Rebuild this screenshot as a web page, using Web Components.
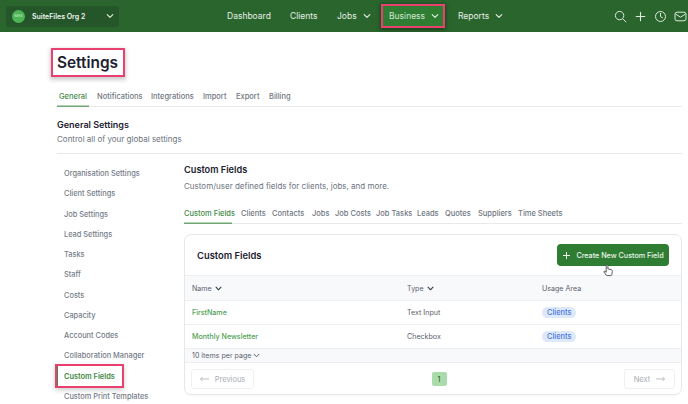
<!DOCTYPE html>
<html><head><meta charset="utf-8">
<style>
html,body{margin:0;height:404px;overflow:hidden;background:#fff}
body{font-family:Inter,Lato,"Noto Sans",sans-serif;color:#1c2230;position:relative}
</style></head><body>
<app-topbar></app-topbar>
<settings-page></settings-page>
<hand-cursor></hand-cursor>
<script>
const chev=(s=8,c='currentColor',w=1.1)=>`<svg width="${s}" height="${s}" viewBox="0 0 10 10" fill="none" stroke="${c}" stroke-width="${w*10/s}" stroke-linecap="round" stroke-linejoin="round"><path d="M1.5 3.2 5 6.8 8.5 3.2"/></svg>`;
function def(name,css,html){
  customElements.define(name,class extends HTMLElement{
    constructor(){super();const r=this.attachShadow({mode:'open'});
      r.innerHTML=`<style>${css}</style>${typeof html==='function'?html(this):html}`;}
  });
}
def('nav-item',`
:host{display:flex;align-items:center;gap:6px;color:#e6f0e6;font-size:8.5px;font-weight:400;height:22px;box-sizing:border-box;white-space:nowrap}
:host([active]){background:#2e7d32;box-shadow:inset 0 0 0 2px #e8406f,0 1px 4px 1px rgba(0,0,0,.35);padding-left:8px;color:#d5e8d5;height:24px}
`,el=>`<slot></slot>${el.hasAttribute('menu')?chev(8,'#e6f0e6'):''}`);
def('app-topbar',`
:host{display:flex;align-items:center;height:32px;background:#2a652d;box-sizing:border-box;padding:0 0 0 6px;overflow:hidden}
.org{width:113px;height:21px;background:#25562a;border-radius:3px;display:flex;align-items:center;padding:0 5px;box-sizing:border-box;color:#eef5ee;font-size:7px;font-weight:600}
.av{width:13px;height:13px;border-radius:50%;background:#4db555;color:#d7f0d8;font-size:3.6px;display:grid;place-items:center;margin:0 7px 0 1px;font-weight:400}
.name{flex:1}
nav{display:flex;align-items:center;margin-left:108px}
nav-item:nth-child(1){width:63px}
nav-item:nth-child(2){width:47px}
nav-item:nth-child(3){width:44px}
nav-item:nth-child(4){width:64px;margin-right:13px}
.ic{display:flex;gap:7px;margin-left:auto;margin-right:1px;color:#dcebdc}
svg.i{display:block}
`,`<div class="org"><span class="av">MAX</span><span class="name">SuiteFiles Org 2</span>${chev(8,'#dcebdc')}</div>
<nav><nav-item>Dashboard</nav-item><nav-item>Clients</nav-item><nav-item menu>Jobs</nav-item><nav-item menu active>Business</nav-item><nav-item menu>Reports</nav-item></nav>
<div class="ic">
<svg class="i" width="13" height="13" viewBox="0 0 13 13" fill="none" stroke="currentColor" stroke-width="1"><circle cx="5.6" cy="5.6" r="4.2"/><path d="M8.8 8.8 12 12" stroke-linecap="round"/></svg>
<svg class="i" width="13" height="13" viewBox="0 0 13 13" fill="none" stroke="currentColor" stroke-width="1.1"><path d="M6.5 2.2v8.6M2.2 6.5h8.6" stroke-linecap="round"/></svg>
<svg class="i" width="13" height="13" viewBox="0 0 13 13" fill="none" stroke="currentColor" stroke-width="1"><circle cx="6.5" cy="6.5" r="5"/><path d="M6.5 3.3v3.4l2 1" stroke-linecap="round"/></svg>
<svg class="i" width="13" height="13" viewBox="0 0 13 13" fill="none" stroke="currentColor" stroke-width="1"><rect x="1" y="2.2" width="11" height="8.6" rx="2"/><path d="M1.5 4 6.5 7.2 11.5 4"/></svg>
</div>`);
def('tab-bar',`
:host{display:flex;border-bottom:1px solid #e8e9ec}
`,`<slot></slot>`);
def('tab-item',`
:host{display:block;padding:1px 0 5px;color:#6f7782;margin-bottom:-1px;font-size:7.5px;font-weight:500;white-space:nowrap;line-height:10px}
:host([active]){color:#458a4b;box-shadow:inset 0 -1.5px 0 #6fa873}
`,`<slot></slot>`);
def('side-item',`
:host{display:flex;align-items:center;height:20.25px;padding-left:7px;font-size:7.4px;font-weight:500;color:#757c87;box-sizing:border-box;position:relative;white-space:nowrap}
:host([active]){color:#3f8a45;font-weight:600;background:#fff;box-shadow:inset 1px 0 0 #3f8a45,0 0 0 2px #e8406f,0 2px 5px 2px rgba(0,0,0,.2);width:65px;z-index:1}
`,`<slot></slot>`);
def('pill-badge',`
:host{display:inline-block;background:#dde8f8;color:#4a78e0;font-size:7.4px;font-weight:500;padding:1.5px 5px;border-radius:6px;line-height:8px}
`,`<slot></slot>`);
def('page-btn',`
:host{display:flex;align-items:center;justify-content:center;gap:6px;height:20px;border:1px solid #eff0f2;border-radius:3px;box-sizing:border-box;color:#a9aeb6;font-size:7.5px}
`,`<slot></slot>`);
const arr=d=>`<svg width="9" height="6" viewBox="0 0 9 6" fill="none" stroke="#a9aeb6" stroke-width=".8">${d?'<path d="M0 3h8.5M6.5 1l2 2-2 2"/>':'<path d="M9 3H.5M2.5 1l-2 2 2 2"/>'}</svg>`;
def('fields-card',`
:host{display:block;margin-top:10px;border:1px solid #e6e7ea;border-radius:7px;box-shadow:0 1px 1px rgba(0,0,0,.03);overflow:hidden;position:relative;background:#fff}
.head{display:flex;align-items:center;justify-content:space-between;height:40px;padding:0 12px;box-sizing:border-box}
h3{margin:0;font-size:9.4px;font-weight:600}
.btn{width:112px;height:22px;background:#2f7d33;color:#eef6ee;border-radius:4px;font-size:7.2px;font-weight:500;display:flex;align-items:center;justify-content:center;gap:5px;box-sizing:border-box}
.row{display:grid;grid-template-columns:215px 135px 1fr;align-items:center;padding-left:7px;border-top:1px solid #eeeff2;font-size:7.1px;color:#5a616c;height:24px;box-sizing:border-box}
.th{background:#f8f9fb;height:25px;color:#5a616c}
.th span{display:inline-flex;gap:3px;align-items:center}
.a{color:#4f9f56;font-weight:500}
.per{background:#f8f9fb;height:15px;display:flex;align-items:center;gap:2px;padding-left:7px;border-top:1px solid #eeeff2;border-bottom:1px solid #eeeff2;font-size:7.1px;color:#5a616c;box-sizing:border-box}
.pg{display:grid;grid-template-columns:63px 1fr 51px;align-items:center;padding:6px 6px 5px;height:31px;box-sizing:border-box}
.n{justify-self:center;width:15px;height:14px;background:#aadcab;border-radius:2px;font-size:7px;color:#3d5c3f;display:grid;place-items:center;font-weight:500}
`,`<div class="head"><h3>Custom Fields</h3><div class="btn"><svg width="9" height="9" viewBox="0 0 9 9" fill="none" stroke="#eef6ee"><path d="M4.5 1v7M1 4.5h7"/></svg>Create New Custom Field</div></div>
<div class="row th"><span>Name ${chev(7,'#333a45',1.1)}</span><span>Type ${chev(7,'#333a45',1.1)}</span><span>Usage Area</span></div>
<div class="row"><span class="a">FirstName</span><span>Text Input</span><span><pill-badge>Clients</pill-badge></span></div>
<div class="row"><span class="a">Monthly Newsletter</span><span>Checkbox</span><span><pill-badge>Clients</pill-badge></span></div>
<div class="per">10 items per page ${chev(7,'#5a616c',1)}</div>
<div class="pg"><page-btn>${arr(0)}Previous</page-btn><div class="n">1</div><page-btn>Next${arr(1)}</page-btn></div>`);
def('hand-cursor',`
:host{position:absolute;left:603px;top:261px;width:11px;height:13px;z-index:3}
`,`<svg width="11" height="13" viewBox="0 0 11 13"><path d="M3.4 1.2c.6-.7 1.5-.3 1.5.5v3.2l3 .6c1 .2 1.5.8 1.4 1.8l-.4 3c-.1.8-.5 1.3-1.2 1.3H4.2c-.5 0-.8-.2-1.1-.6L1 8.2c-.4-.6.3-1.4 1-.9l1.2 1V2c0-.3 0-.6.2-.8Z" fill="#fff" stroke="#333" stroke-width=".8"/></svg>`);
def('settings-page',`
:host{display:block;padding:16px 6px 0 57px}
.t{display:block;box-sizing:border-box;width:74px;margin:0 0 0 -6px;padding:0 6px;height:29px;line-height:29px;font-size:15.4px;font-weight:600;color:#1b2130;box-shadow:inset 0 0 0 2px #e8406f,0 2px 4px 1px rgba(0,0,0,.2)}
.tabs1{margin-top:14px}
.gs{font-size:9px;font-weight:600;margin:12px 0 0;line-height:12px}
.sub{font-size:8px;color:#6c737d;margin:2px 0 0;line-height:12px}
.rule{border-top:1px solid #e8e9ec;margin-top:8px}
.cols{display:grid;grid-template-columns:127px 1fr;margin-top:9.5px}
.main{padding-top:.5px}
h2{font-size:9.2px;margin:0;font-weight:600;line-height:12px;}
.sub2{font-size:8px;color:#6c737d;margin:4px 0 0;line-height:12px}
.tabs2{margin-top:16px}
.tabs1 tab-item:nth-child(2){margin-left:8px;padding-left:0;width:54px}
.tabs1 tab-item:nth-child(3){width:52px}
.tabs1 tab-item:nth-child(4){width:33px}
.tabs1 tab-item:nth-child(5){width:33px}
.tabs1 tab-item:nth-child(1){width:28px;padding-left:2px;padding-right:2px}
.w2 tab-item:nth-child(1){width:48px;margin-right:9px}
.w2 tab-item:nth-child(2){width:31px}
.w2 tab-item:nth-child(3){width:40px}
.w2 tab-item:nth-child(4){width:23px}
.w2 tab-item:nth-child(5){width:41px}
.w2 tab-item:nth-child(6){width:41px}
.w2 tab-item:nth-child(7){width:28px}
.w2 tab-item:nth-child(8){width:33px}
.w2 tab-item:nth-child(9){width:40px}
`,`<h1 class="t">Settings</h1>
<tab-bar class="tabs1">
<tab-item active>General</tab-item><tab-item>Notifications</tab-item><tab-item>Integrations</tab-item><tab-item>Import</tab-item><tab-item>Export</tab-item><tab-item>Billing</tab-item></tab-bar>
<div class="gs">General Settings</div>
<div class="sub">Control all of your global settings</div>
<div class="rule"></div>
<div class="cols">
<div class="side"><side-item>Organisation Settings</side-item><side-item>Client Settings</side-item><side-item>Job Settings</side-item><side-item>Lead Settings</side-item><side-item>Tasks</side-item><side-item>Staff</side-item><side-item>Costs</side-item><side-item>Capacity</side-item><side-item>Account Codes</side-item><side-item>Collaboration Manager</side-item><side-item active>Custom Fields</side-item><side-item>Custom Print Templates</side-item></div>
<div class="main"><h2>Custom Fields</h2><div class="sub2">Custom/user defined fields for clients, jobs, and more.</div>
<tab-bar class="tabs2 w2"><tab-item active>Custom Fields</tab-item><tab-item>Clients</tab-item><tab-item>Contacts</tab-item><tab-item>Jobs</tab-item><tab-item>Job Costs</tab-item><tab-item>Job Tasks</tab-item><tab-item>Leads</tab-item><tab-item>Quotes</tab-item><tab-item>Suppliers</tab-item><tab-item>Time Sheets</tab-item></tab-bar>
<fields-card></fields-card></div>
</div>`);
</script>
</body></html>
